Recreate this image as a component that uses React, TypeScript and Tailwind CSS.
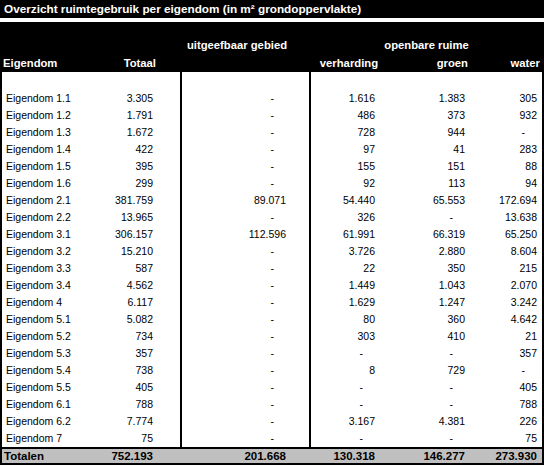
const rows: [string, string, string, string, string, string][] = [
  ['Eigendom 1.1', '3.305', '-', '1.616', '1.383', '305'],
  ['Eigendom 1.2', '1.791', '-', '486', '373', '932'],
  ['Eigendom 1.3', '1.672', '-', '728', '944', '-'],
  ['Eigendom 1.4', '422', '-', '97', '41', '283'],
  ['Eigendom 1.5', '395', '-', '155', '151', '88'],
  ['Eigendom 1.6', '299', '-', '92', '113', '94'],
  ['Eigendom 2.1', '381.759', '89.071', '54.440', '65.553', '172.694'],
  ['Eigendom 2.2', '13.965', '-', '326', '-', '13.638'],
  ['Eigendom 3.1', '306.157', '112.596', '61.991', '66.319', '65.250'],
  ['Eigendom 3.2', '15.210', '-', '3.726', '2.880', '8.604'],
  ['Eigendom 3.3', '587', '-', '22', '350', '215'],
  ['Eigendom 3.4', '4.562', '-', '1.449', '1.043', '2.070'],
  ['Eigendom 4', '6.117', '-', '1.629', '1.247', '3.242'],
  ['Eigendom 5.1', '5.082', '-', '80', '360', '4.642'],
  ['Eigendom 5.2', '734', '-', '303', '410', '21'],
  ['Eigendom 5.3', '357', '-', '-', '-', '357'],
  ['Eigendom 5.4', '738', '-', '8', '729', '-'],
  ['Eigendom 5.5', '405', '-', '-', '-', '405'],
  ['Eigendom 6.1', '788', '-', '-', '-', '788'],
  ['Eigendom 6.2', '7.774', '-', '3.167', '4.381', '226'],
  ['Eigendom 7', '75', '-', '-', '-', '75'],
];

// header spans the full 544px, body sits inside a 2px frame
const headGrid = 'grid grid-cols-[100px_80px_129px_81px_80px_74px]';
const bodyGrid = 'grid grid-cols-[98px_80px_129px_81px_80px_72px]';

// accounting style: dash sits a bit left of where numbers end
const Num = ({ v, pr, border }: { v: string; pr: string; border?: boolean }) => (
  <div className={`text-right ${pr} ${border ? 'border-l-2 border-black' : ''}`}>
    {v === '-' ? <span className="pr-[12px]">-</span> : v}
  </div>
);

export default function App() {
  return (
    <div className="w-[544px] h-[466px] bg-white text-black text-[10.5px] leading-[17px] font-['Liberation_Sans',Arial,sans-serif]">
      <div className="h-[18px] bg-black text-white font-bold text-[11.75px] leading-[18px] pl-[4px]">
        Overzicht ruimtegebruik per eigendom (in m² grondoppervlakte)
      </div>
      <div className="h-[4px]" />
      <div className="h-[50px] bg-black text-white font-bold text-[11.25px] pt-[14px]">
        <div className={`${headGrid} h-[18px] leading-[18px]`}>
          <div />
          <div />
          <div className="text-center pr-[15px] whitespace-nowrap">uitgeefbaar gebied</div>
          <div className="col-span-3 text-center">openbare ruime</div>
        </div>
        <div className={`${headGrid} h-[18px] leading-[18px]`}>
          <div className="pl-[3px]">Eigendom</div>
          <div className="text-right pr-[24px]">Totaal</div>
          <div />
          <div className="text-right pr-[12px]">verharding</div>
          <div className="text-right pr-[2px]">groen</div>
          <div className="text-right pr-[4px]">water</div>
        </div>
      </div>
      <div className="border-l-2 border-r-2 border-black">
        <div className={`${bodyGrid} h-[18px]`}>
          <div />
          <div />
          <div className="border-l-2 border-black" />
          <div className="border-l-2 border-black" />
        </div>
        {rows.map((r) => (
          <div key={r[0]} className={`${bodyGrid} h-[17px]`}>
            <div className="pl-[4px]">{r[0]}</div>
            <div className="text-right pr-[27px]">{r[1]}</div>
            <Num v={r[2]} pr="pr-[23px]" border />
            <Num v={r[3]} pr="pr-[15px]" border />
            <Num v={r[4]} pr="pr-[5px]" />
            <Num v={r[5]} pr="pr-[5px]" />
          </div>
        ))}
        <div className={`${bodyGrid} h-[18px] bg-[#c0c0c0] border-t-2 border-b-2 border-black font-bold text-[11.5px] leading-[15px]`}>
          <div className="pl-[2px]">Totalen</div>
          <div className="text-right pr-[27px]">752.193</div>
          <div className="text-right pr-[23px]">201.668</div>
          <div className="text-right pr-[15px]">130.318</div>
          <div className="text-right pr-[5px]">146.277</div>
          <div className="text-right pr-[5px]">273.930</div>
        </div>
      </div>
    </div>
  );
}
